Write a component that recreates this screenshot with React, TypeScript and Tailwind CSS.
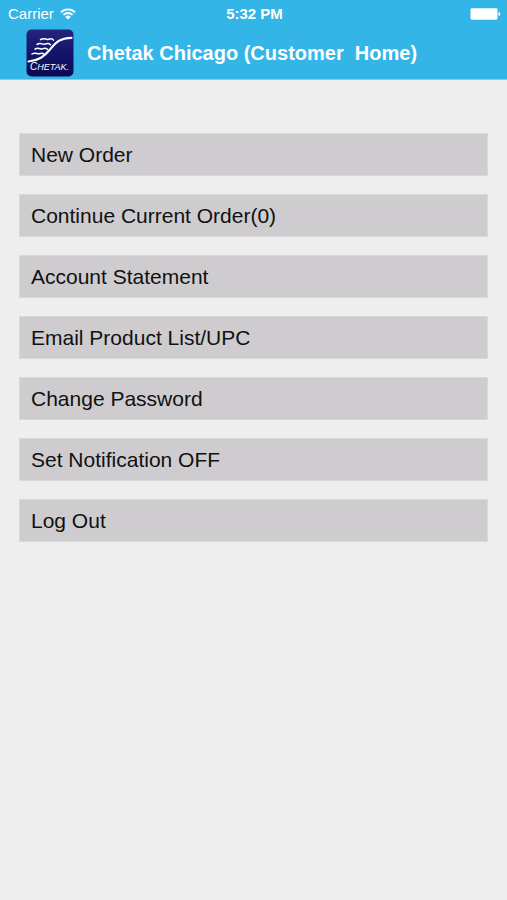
const menuItems = [
  'New Order',
  'Continue Current Order(0)',
  'Account Statement',
  'Email Product List/UPC',
  'Change Password',
  'Set Notification OFF',
  'Log Out',
];

function WifiIcon() {
  return (
    <svg viewBox="0 0 16 12" className="h-3 w-4" fill="none" stroke="currentColor" strokeWidth="1.8">
      <path d="M1 4.3a9.9 9.9 0 0 1 14 0" />
      <path d="M3.4 6.9a6.5 6.5 0 0 1 9.2 0" />
      <path d="M8 11.6 5.3 8.9a3.8 3.8 0 0 1 5.4 0z" fill="currentColor" stroke="none" />
    </svg>
  );
}

function BatteryIcon() {
  return (
    <svg viewBox="0 0 31 12" className="h-3 w-[31px]" fill="currentColor">
      <rect x="0.5" y="0.3" width="27" height="11.4" rx="1.4" />
      <path d="M28.5 4v4c1.3-.4 1.8-1.1 1.8-2s-.5-1.6-1.8-2z" />
    </svg>
  );
}

function StatusBar() {
  return (
    <div className="grid h-7 grid-cols-3 items-center pr-[6px] pl-2 text-[15px] leading-7">
      <div className="flex items-center gap-[6px]">
        <span>Carrier</span>
        <WifiIcon />
      </div>
      <span className="text-center font-bold">5:32 PM</span>
      <div className="flex justify-end">
        <BatteryIcon />
      </div>
    </div>
  );
}

function Logo() {
  return (
    <svg viewBox="0 0 48 48" className="h-12 w-12 shrink-0" role="img" aria-label="Chetak">
      <defs>
        <linearGradient id="logo-bg" x1="0" y1="0" x2="0" y2="1">
          <stop offset="0" stopColor="#25257f" />
          <stop offset="0.5" stopColor="#14146c" />
          <stop offset="1" stopColor="#0a0a52" />
        </linearGradient>
      </defs>
      <rect x="0.5" y="0.5" width="47" height="47" rx="5" fill="url(#logo-bg)" />
      <g fill="none" stroke="#fff" strokeLinecap="round">
        <path d="M2.5 32.5C13 31.5 18 27.5 24 20.5S33.5 9 45.5 8.8" strokeWidth="2.2" />
        <path d="M14.5 10.6c3.5-2.4 5.5.6 8-.3s4-.8 5 .8" strokeWidth="1.5" />
        <path d="M11 15.4c3.5-2.4 5.5.6 8-.3s4-.8 5.5.6" strokeWidth="1.5" />
        <path d="M9 20.2c3.5-2.4 5.5.6 7.5-.3s3.500-.8 5 .4" strokeWidth="1.5" />
        <path d="M6 25c3.5-2.4 5.5.6 7.5-.3s3-.8 4.5.4" strokeWidth="1.5" />
      </g>
      <text x="4" y="41" fill="#fff" className="font-['Liberation_Sans'] italic">
        <tspan fontSize="10">C</tspan>
        <tspan fontSize="9">HETAK.</tspan>
      </text>
    </svg>
  );
}

export default function App() {
  return (
    <div className="min-h-screen bg-[#eeeeee] font-['Liberation_Sans',Arial,sans-serif]">
      <header className="border-b border-[#7fd0ee] bg-[#33b5e7] text-white">
        <StatusBar />
        <div className="flex items-center gap-[13px] pt-px pb-[2px] pl-[26px]">
          <Logo />
          <h1 className="text-xl font-bold whitespace-pre">Chetak Chicago (Customer  Home)</h1>
        </div>
      </header>
      <main className="px-[19px] pt-[53px]">
        <nav className="flex flex-col gap-[18px]">
          {menuItems.map((item) => (
            <button
              key={item}
              type="button"
              className="h-[43px] w-full border border-[#d8d7d9] bg-[#cecccf] px-[11px] text-left text-[21px] text-[#111111]"
            >
              {item}
            </button>
          ))}
        </nav>
      </main>
    </div>
  );
}
